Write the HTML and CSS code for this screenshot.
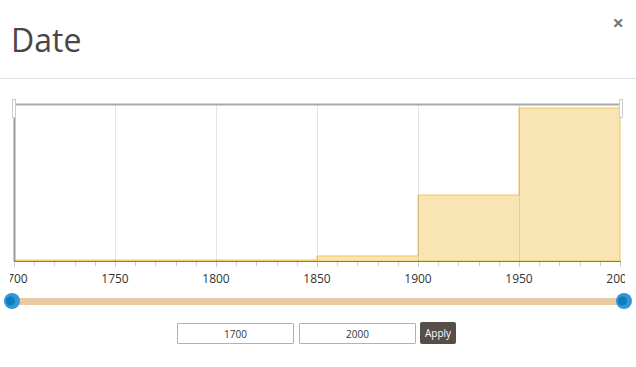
FILE: index.html
```html
<!DOCTYPE html>
<html lang="en">
<head>
    <meta charset="UTF-8">
    <title>Date</title>
    <link rel="stylesheet" href="styles.css">
</head>
<body>
    <div class="modal">
        <div class="modal-header">
            <h1>Date</h1>
            <span class="close-btn">&times;</span>
        </div>
        <div class="modal-body">
            <svg class="chart" width="615" height="196" viewBox="0 0 615 196">
                <!-- histogram -->
                <path d="M4 165 L4 164 L307 164 L307 160 L408 160 L408 99 L509 99 L509 12 L610 12 L610 165 Z"
                      fill="#f8e5b3" stroke="#f2c55c" stroke-width="1"/>
                <!-- grid -->
                <g stroke="rgba(0,0,0,0.1)" stroke-width="1">
                    <line x1="105.5" y1="9" x2="105.5" y2="165"/>
                    <line x1="206.5" y1="9" x2="206.5" y2="165"/>
                    <line x1="307.5" y1="9" x2="307.5" y2="165"/>
                    <line x1="408.5" y1="9" x2="408.5" y2="165"/>
                    <line x1="509.5" y1="9" x2="509.5" y2="165"/>
                </g>
                <!-- axes -->
                <line x1="4" y1="8.5" x2="612" y2="8.5" stroke="#aaa" stroke-width="2"/>
                <line x1="4.5" y1="8" x2="4.5" y2="165" stroke="#999" stroke-width="2"/>
                <line x1="4" y1="165.5" x2="611" y2="165.5" stroke="#7a7a7a" stroke-width="1"/>
                <g stroke="#ccc" stroke-width="1" id="ticks"></g>
                <g class="labels">
                    <text x="4" y="187">1700</text>
                    <text x="105" y="187">1750</text>
                    <text x="206" y="187">1800</text>
                    <text x="307" y="187">1850</text>
                    <text x="408" y="187">1900</text>
                    <text x="509" y="187">1950</text>
                    <text x="610" y="187">2000</text>
                </g>
                <!-- brush handles -->
                <rect x="2.5" y="3.5" width="3" height="18" fill="#fff" stroke="#ccc"/>
                <rect x="609.5" y="3.5" width="3" height="18" fill="#fff" stroke="#ccc"/>
            </svg>
            <div class="slider">
                <div class="slider-track"></div>
                <span class="slider-handle handle-left"></span>
                <span class="slider-handle handle-right"></span>
            </div>
            <div class="range-form">
                <input type="text" class="range-input" value="1700">
                <input type="text" class="range-input" value="2000">
                <button class="apply-button">Apply</button>
            </div>
        </div>
    </div>
    <script>
        // kleine streepjes onder de as, elke 10 jaar
        var g = document.getElementById('ticks');
        for (var i = 0; i <= 30; i++) {
            var x = Math.round(4 + i * 20.2) + 0.5;
            var l = document.createElementNS('http://www.w3.org/2000/svg', 'line');
            l.setAttribute('x1', x);
            l.setAttribute('x2', x);
            l.setAttribute('y1', 166);
            l.setAttribute('y2', i % 5 == 0 ? 171 : 170);
            g.appendChild(l);
        }
    </script>
</body>
</html>
```

FILE: styles.css
```css
* {
    margin: 0;
    padding: 0;
    box-sizing: border-box;
}

body {
    font-family: "Open Sans", sans-serif;
    color: #333;
    background: white;
}

.modal {
    width: 636px;
    height: 367px;
}

.modal-header {
    display: flex;
    justify-content: space-between;
    align-items: flex-start;
    height: 79px;
    padding: 19px 12px 0 11px;
    border-bottom: 1px solid #dde3e8;
}

.modal-header h1 {
    font-size: 32px;
    font-weight: 400;
    line-height: 42px;
    color: #4b4545;
}

.close-btn {
    font-size: 20px;
    font-weight: 700;
    line-height: 14px;
    color: #777;
    margin-top: -3px;
}

.modal-body {
    padding-top: 17px;
}

.chart {
    display: block;
    margin-left: 10px;
}

.labels text {
    font-family: "Open Sans", sans-serif;
    font-size: 12px;
    fill: #333;
    text-anchor: middle;
}

.slider {
    position: relative;
    height: 16px;
    margin: 1px 12px 0 12px;
    display: flex;
    align-items: center;
}

.slider-track {
    width: 100%;
    height: 7px;
    background: #e8c9a0;
}

.slider-handle {
    position: absolute;
    top: 0;
    width: 16px;
    height: 16px;
    border-radius: 50%;
    background: radial-gradient(circle at 40% 50%, #0b7fbd 0, #0b7fbd 4px, #3296d8 5px);
}

.handle-left {
    left: -8px;
}

.handle-right {
    right: -8px;
}

.range-form {
    display: flex;
    justify-content: center;
    align-items: center;
    gap: 5px;
    margin-top: 14px;
    padding-right: 3px;
}

.range-input {
    width: 117px;
    height: 21px;
    border: 1px solid #aab1c2;
    border-radius: 1px;
    text-align: center;
    font-family: "Open Sans", sans-serif;
    font-size: 10px;
    color: #333;
}

.apply-button {
    height: 22px;
    padding: 0 5px;
    margin-left: -1px;
    border: none;
    border-radius: 2px;
    background-color: #574d4a;
    color: white;
    font-family: "Open Sans", sans-serif;
    font-size: 10px;
    font-weight: 400;
    line-height: 18px;
    align-self: flex-start;
    margin-top: -1px;
}
```
